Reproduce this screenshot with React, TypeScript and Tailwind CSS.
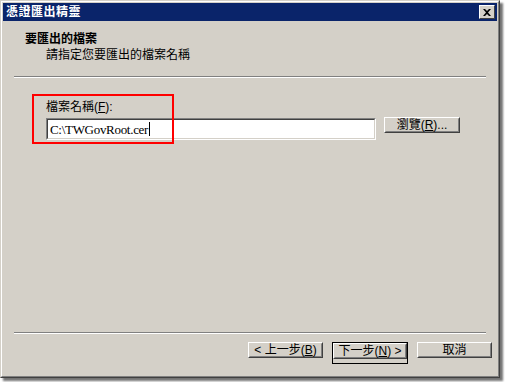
import React from "react";

const cjk = "font-['Liberation_Sans','Noto_Sans_CJK_TC',sans-serif]";

function Btn({
  children,
  className = "",
  isDefault = false,
}: {
  children: React.ReactNode;
  className?: string;
  isDefault?: boolean;
}) {
  return (
    <div
      className={`${isDefault ? "border border-black" : ""} ${className}`}
    >
      <div className="border border-t-white border-l-white border-r-[#404040] border-b-[#404040]">
        <div className="flex h-full items-center justify-center border border-t-[#d4d0c8] border-l-[#d4d0c8] border-r-[#808080] border-b-[#808080] text-[12px] leading-none text-black">
          {children}
        </div>
      </div>
    </div>
  );
}

function Separator({ className = "" }: { className?: string }) {
  return (
    <div className={`border-t border-t-[#808080] border-b border-b-white ${className}`} />
  );
}

export default function App() {
  return (
    <div className={`relative h-[382px] w-[505px] bg-white ${cjk}`}>
      {/* window */}
      <div className="h-[378px] w-[500px] border border-t-[#d4d0c8] border-l-[#d4d0c8] border-r-[#404040] border-b-[#404040] bg-[#d4d0c8] shadow-[3px_3px_2px_rgba(0,0,0,0.55)]">
        <div className="flex h-full flex-col border border-t-white border-l-white border-r-[#808080] border-b-[#808080] p-px">
          {/* title bar */}
          <div className="flex h-[18px] shrink-0 items-center justify-between bg-[#0a246a] pl-[3px] pr-[2px]">
            <span className="text-[12px] font-bold leading-none tracking-[0.5px] text-white">
              憑證匯出精靈
            </span>
            <div className="flex h-[14px] w-[16px] items-center justify-center border border-t-white border-l-white border-r-[#404040] border-b-[#404040] bg-[#d4d0c8]">
              <svg width="8" height="7" viewBox="0 0 8 7">
                <path d="M0 0h2l2 2 2-2h2L5 3.5 8 7H6L4 5 2 7H0l3-3.5z" fill="#000" />
              </svg>
            </div>
          </div>

          {/* header */}
          <div className="shrink-0 pl-[22px] pt-[11px]">
            <div className="text-[12px] font-bold leading-[14px] text-black">要匯出的檔案</div>
            <div className="mt-[2px] pl-[21px] text-[12px] leading-[14px] text-black">
              請指定您要匯出的檔案名稱
            </div>
          </div>
          <Separator className="mx-[11px] mt-[14px]" />

          {/* body */}
          <div className="relative flex-1 pl-[43px] pt-[22px]">
            <div className="text-[12px] leading-[14px] text-black">
              檔案名稱(<span className="underline">F</span>):
            </div>
            <div className="mt-[4px] flex items-start gap-[8px]">
              <div className="h-[22px] w-[330px] border border-t-[#808080] border-l-[#808080] border-r-white border-b-white">
                <div className="flex h-full items-center border border-t-[#404040] border-l-[#404040] border-r-[#d4d0c8] border-b-[#d4d0c8] bg-white pl-[2px]">
                  <span className="font-['Liberation_Serif',serif] text-[13px] leading-none tracking-[-0.3px] text-black">
                    C:\TWGovRoot.cer
                  </span>
                  <span className="ml-px h-[14px] w-px bg-black" />
                </div>
              </div>
              <Btn className="-mt-px h-[23px] w-[76px]">
                瀏覽(<span className="underline">R</span>)...
              </Btn>
            </div>
            {/* red highlight */}
            <div className="absolute left-[29px] top-[16px] h-[50px] w-[142px] border-2 border-[#ff0000]" />
          </div>

          {/* footer */}
          <Separator className="mx-[11px]" />
          <div className="flex shrink-0 justify-end gap-[9px] pb-[11px] pr-[5px] pt-[8px]">
            <Btn className="h-[22px] w-[75px]">
              &lt; 上一步(<span className="underline">B</span>)
            </Btn>
            <Btn isDefault className="h-[22px] w-[76px]">
              下一步(<span className="underline">N</span>) &gt;
            </Btn>
            <Btn className="h-[22px] w-[75px]">取消</Btn>
          </div>
        </div>
      </div>
    </div>
  );
}
